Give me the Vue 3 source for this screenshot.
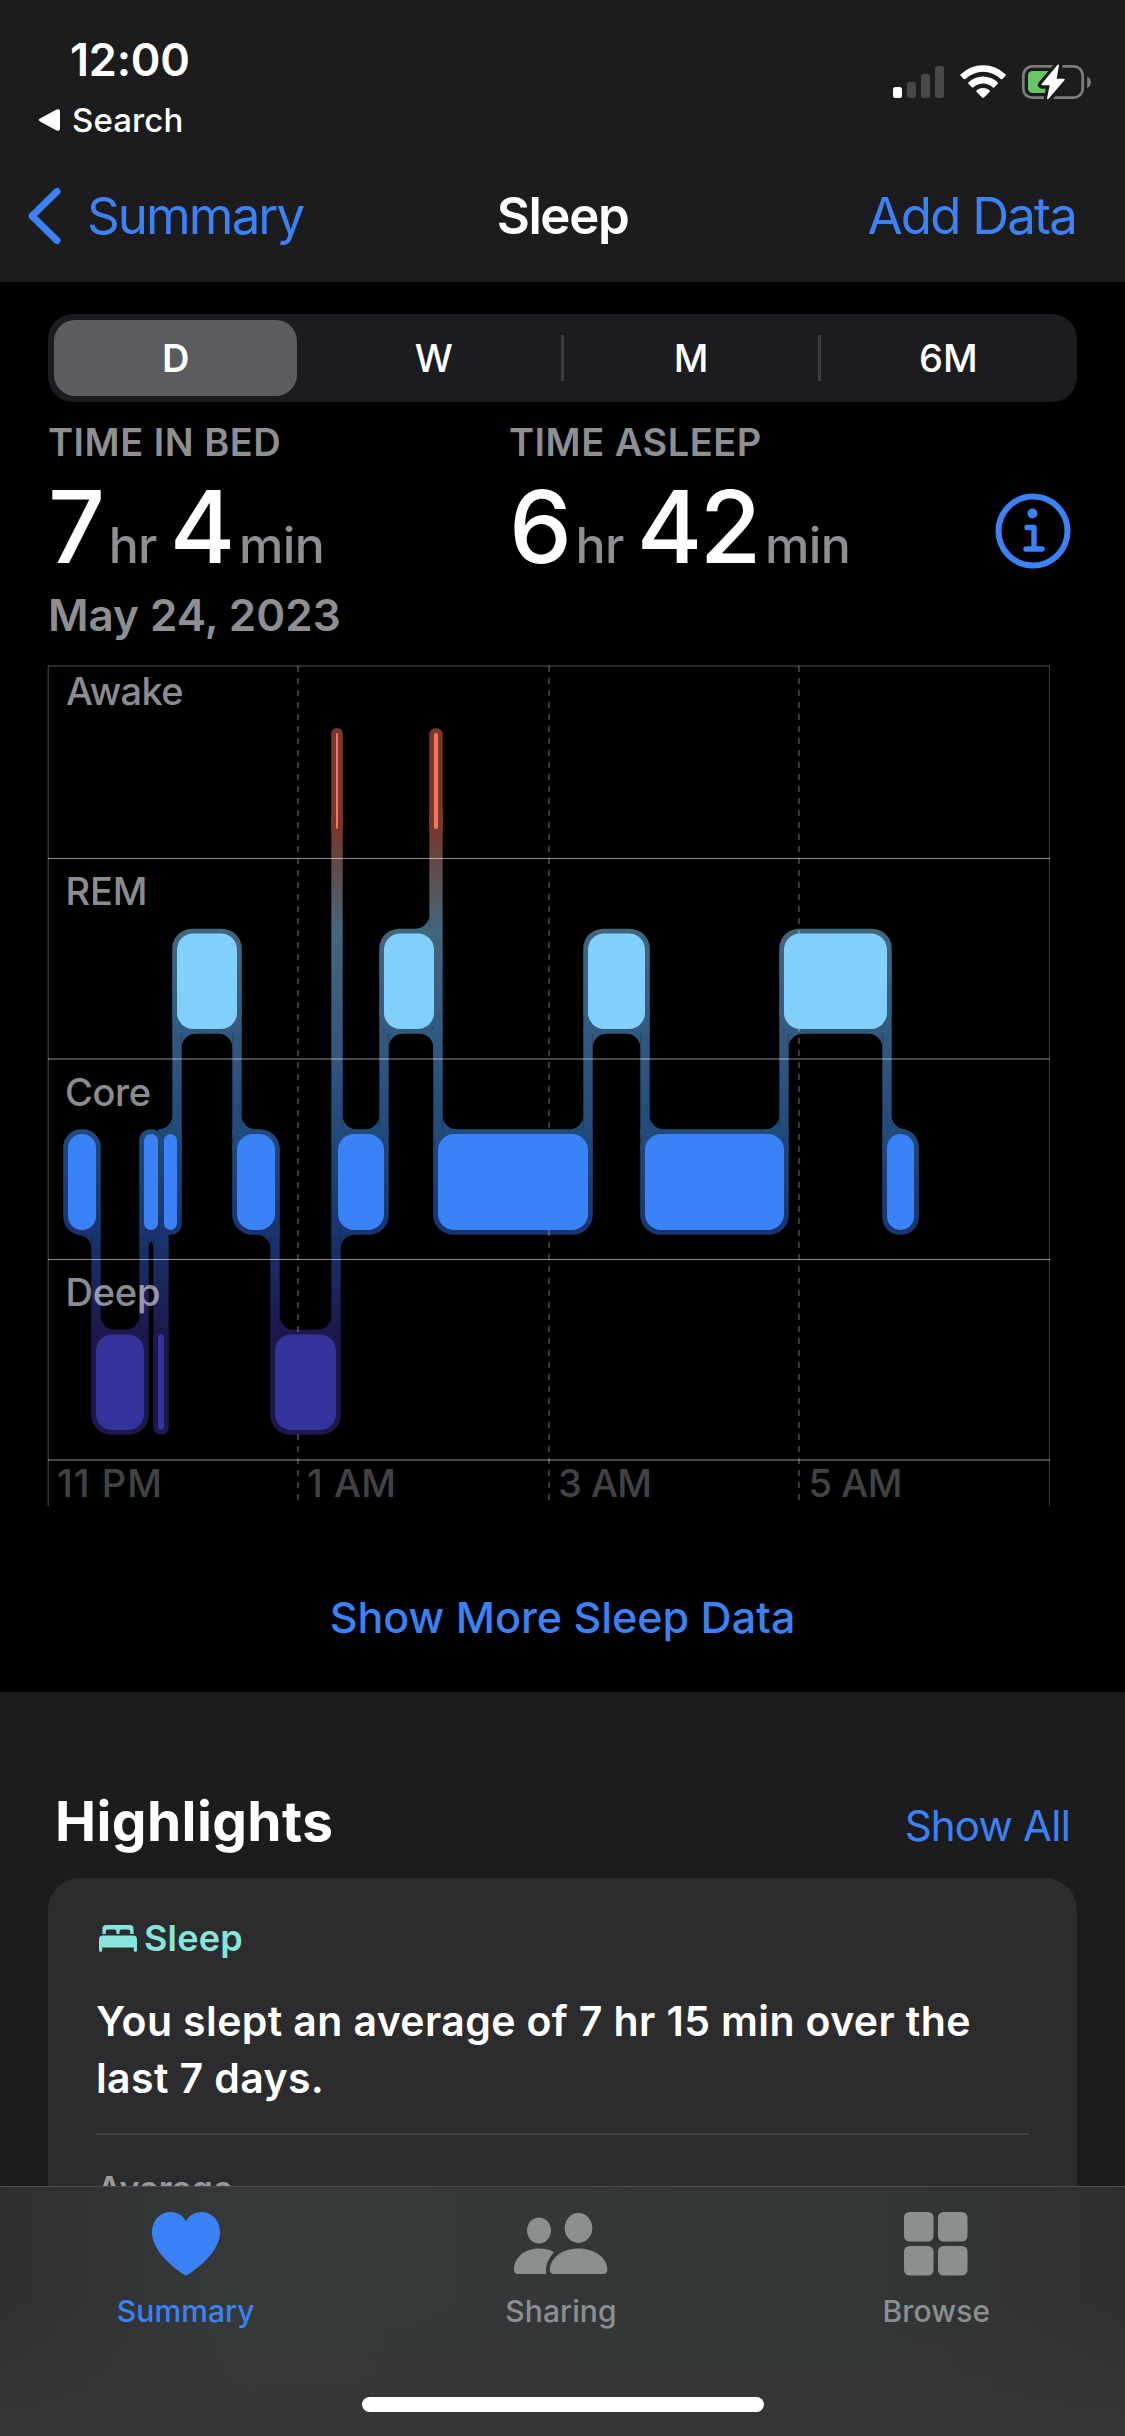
<script setup>
import { ref, computed } from 'vue';

const ranges = ['D', 'W', 'M', '6M'];
const activeRange = ref('D');

const stats = [
  { label: 'TIME IN BED', hours: 7, minutes: 4 },
  { label: 'TIME ASLEEP', hours: 6, minutes: 42 },
];

// top / bottom of each stage lane inside the chart
const stages = {
  awake: { top: 733, bottom: 829, color: '#ff7357' },
  rem: { top: 933.5, bottom: 1029, color: '#82cffc' },
  core: { top: 1134, bottom: 1230, color: '#3b82f7' },
  deep: { top: 1334.5, bottom: 1430, color: '#36349c' },
};

// the night, segment by segment
const segments = [
  { stage: 'core', from: 68, to: 96 },
  { stage: 'deep', from: 96, to: 144 },
  { stage: 'core', from: 144, to: 158 },
  { stage: 'deep', from: 158, to: 164 },
  { stage: 'core', from: 164, to: 177 },
  { stage: 'rem', from: 177, to: 237 },
  { stage: 'core', from: 237, to: 275 },
  { stage: 'deep', from: 275, to: 336 },
  { stage: 'awake', from: 336, to: 338 },
  { stage: 'core', from: 338, to: 384 },
  { stage: 'rem', from: 384, to: 434 },
  { stage: 'awake', from: 434, to: 438 },
  { stage: 'core', from: 438, to: 588 },
  { stage: 'rem', from: 588, to: 645 },
  { stage: 'core', from: 645, to: 784 },
  { stage: 'rem', from: 784, to: 887 },
  { stage: 'core', from: 887, to: 914 },
];

const PAD = 4.7;
const FILLET = 14;

const blocks = computed(() =>
  segments.map((s) => {
    const { top, bottom, color } = stages[s.stage];
    const w = s.to - s.from;
    return { x: s.from, y: top, w, h: bottom - top, r: Math.min(16, w / 2), color };
  })
);

// concave corner between a link and a block, plus the block's own corner squared off
const fillet = (x, y, dx, dy) => {
  const r = FILLET;
  const sweep = dx * dy > 0 ? 0 : 1;
  const x0 = x - dx * PAD * 2;
  const x1 = x + dx * r;
  return (
    `M${x} ${y}H${x1}A${r} ${r} 0 0 ${sweep} ${x} ${y + dy * r}z` +
    `M${x0} ${y}H${x1}V${y - dy * PAD}H${x0}z`
  );
};

const links = computed(() =>
  segments.slice(1).flatMap((next, i) => {
    const prev = segments[i];
    const prevUpper = stages[prev.stage].top < stages[next.stage].top;
    const upper = prevUpper ? prev : next;
    const lower = prevUpper ? next : prev;
    const y1 = stages[upper.stage].bottom - 16;
    const y2 = stages[lower.stage].top + 16;
    const side = prevUpper ? 1 : -1;
    const x = next.from;
    const paths = [`M${x - PAD} ${y1}H${x + PAD}V${y2}H${x - PAD}z`];
    // narrow segments have no room for a rounded corner
    if (upper.to - upper.from > 13) paths.push(fillet(x - side * PAD, stages[upper.stage].bottom + PAD, -side, 1));
    if (lower.to - lower.from > 7) paths.push(fillet(x + side * PAD, stages[lower.stage].top - PAD, side, -1));
    return paths;
  })
);

// links passing behind a neighbouring segment
const crossings = [
  fillet(340.7, 1234.7, 1, 1),
  fillet(433.3, 1033.7, -1, 1),
  'M429.3 1010H438.7V1060H433.3V1010z',
];

const laneLabels = [
  { text: 'Awake', x: 66, y: 704.5, w: 117.5 },
  { text: 'REM', x: 65.5, y: 905, w: 82 },
  { text: 'Core', x: 65, y: 1106, w: 86 },
  { text: 'Deep', x: 65.5, y: 1305.5, w: 95 },
];

const ticks = [
  { text: '11 PM', x: 57, w: 105 },
  { text: '1 AM', x: 307, w: 89 },
  { text: '3 AM', x: 558, w: 94 },
  { text: '5 AM', x: 808.5, w: 94 },
];
</script>

<template>
  <div class="screen">
    <header class="header">
      <div class="status">
        <div class="status-left">
          <div class="clock">12:00</div>
          <div class="back-app">
            <svg width="22" height="22" viewBox="0 0 22 22">
              <path d="M2.5 9.3L18.6 .6Q22 -.6 22 2.4V19.6Q22 22.6 18.6 21.4L2.5 12.7Q-1 11 2.5 9.3z" fill="#fff" />
            </svg>
            <span>Search</span>
          </div>
        </div>
        <svg class="status-icons" width="200" height="38" viewBox="893 63 200 38">
          <rect x="893" y="87" width="9" height="11" rx="2.5" fill="#fff" />
          <g fill="#48484a">
            <rect x="907" y="82" width="9" height="16" rx="2.5" />
            <rect x="921" y="74" width="9" height="24" rx="2.5" />
            <rect x="935" y="66" width="9" height="32" rx="2.5" />
          </g>
          <!-- wifi -->
          <g fill="#fff">
            <path d="M960.8 74.2a32 32 0 0 1 44.6 0q.9.9 0 1.8l-2.9 2.9q-.9.9-1.8 0a25.5 25.5 0 0 0-35.2 0q-.9.9-1.8 0l-2.9-2.9q-.9-.9 0-1.8z" />
            <path d="M968.6 82.2a21 21 0 0 1 29 0q.9.9 0 1.8l-3.2 3.2q-.9.9-1.8 0a14.2 14.2 0 0 0-19 0q-.9.9-1.8 0l-3.2-3.2q-.9-.9 0-1.8z" />
            <path d="M976.7 90.3a9.8 9.8 0 0 1 12.8 0q.9.9 0 1.8l-5.5 5.5q-.9.9-1.8 0l-5.5-5.5q-.9-.9 0-1.8z" />
          </g>
          <!-- battery -->
          <rect x="1023.3" y="66.3" width="59.4" height="31.4" rx="9" fill="none" stroke="#7c7c7e" stroke-width="2.8" />
          <path d="M1087.2 76.5c5 2 5 9.5 0 11.5z" fill="#7c7c7e" />
          <rect x="1028" y="71" width="27" height="22" rx="4.5" fill="#67c767" />
          <path d="M1058.5 65L1042 84.8H1050.6L1047.8 98.8L1064.3 79.3H1056z" fill="#1c1c1e" stroke="#1c1c1e" stroke-width="8" stroke-linejoin="round" />
          <path d="M1058.2 65.3L1042.2 84.5H1050.6L1047.8 98.5L1064 79.5H1055.8z" fill="#fff" stroke="#fff" stroke-width="1.5" stroke-linejoin="round" />
        </svg>
      </div>
      <nav class="nav">
        <a class="nav-back">
          <svg width="34" height="58" viewBox="0 0 34 58">
            <path d="M29 4.5L4 29L29 53.5" fill="none" stroke="#3b82f7" stroke-width="7" stroke-linecap="round" stroke-linejoin="round" />
          </svg>
          <span>Summary</span>
        </a>
        <h1>Sleep</h1>
        <a class="nav-add">Add Data</a>
      </nav>
    </header>

    <main class="content">
      <section class="chart-section">
        <div class="segmented">
          <button
            v-for="r in ranges"
            :key="r"
            :class="['segment', 'segment-' + r, { active: r === activeRange }]"
            @click="activeRange = r"
          >{{ r }}</button>
        </div>

        <div class="stats">
          <div v-for="s in stats" :key="s.label" class="stat">
            <div class="stat-label">{{ s.label }}</div>
            <div class="stat-value">
              <span class="num">{{ s.hours }}</span><span class="unit hr">hr</span><span class="num">{{ s.minutes }}</span><span class="unit">min</span>
            </div>
          </div>
          <svg class="info" width="76" height="76" viewBox="0 0 76 76" fill="none" stroke="#3b82f7">
            <circle cx="38" cy="38" r="34.5" stroke-width="6" />
            <circle cx="37.5" cy="20.5" r="5" fill="#3b82f7" stroke="none" />
            <path d="M32 34.5H39V56M31 56H47" stroke-width="5.4" stroke-linecap="round" stroke-linejoin="round" />
          </svg>
        </div>
        <div class="date">May 24, 2023</div>

        <svg class="chart" width="1125" height="860" viewBox="0 660 1125 860">
          <defs>
            <linearGradient id="stageFill" gradientUnits="userSpaceOnUse" x1="0" y1="829" x2="0" y2="1334">
              <stop offset="0" stop-color="#76382c" />
              <stop offset="0.2" stop-color="#42677c" />
              <stop offset="0.4" stop-color="#325a80" />
              <stop offset="0.6" stop-color="#224a7b" />
              <stop offset="0.8" stop-color="#19346f" />
              <stop offset="1" stop-color="#1b184b" />
            </linearGradient>
          </defs>

          <g fill="url(#stageFill)">
            <rect
              v-for="(b, i) in blocks"
              :key="'o' + i"
              :x="b.x - 4.8"
              :y="b.y - 4.8"
              :width="b.w + 9.6"
              :height="b.h + 9.6"
              :rx="b.r + 4"
            />
            <path v-for="(d, i) in links" :key="'l' + i" :d="d" />
            <path v-for="(d, i) in crossings" :key="'c' + i" :d="d" />
          </g>

          <!-- grid -->
          <g fill="#ebebf5">
            <rect x="48" y="665" width="1002" height="2" opacity="0.17" />
            <rect x="48" y="858" width="1002" height="1" opacity="0.6" />
            <rect x="48" y="1058" width="1002" height="2" opacity="0.3" />
            <rect x="48" y="1259" width="1002" height="1" opacity="0.6" />
            <rect x="48" y="1459" width="1002" height="2" opacity="0.3" />
            <rect x="47.5" y="666" width="1.5" height="840" opacity="0.22" />
            <rect x="1049" y="666" width="1" height="840" opacity="0.25" />
          </g>
          <g stroke="#ebebf5" stroke-opacity="0.25" stroke-width="2" stroke-dasharray="6 6">
            <path d="M298 666V1500" />
            <path d="M549 666V1500" />
            <path d="M799 666V1500" />
          </g>

          <rect
            v-for="(b, i) in blocks"
            :key="'b' + i"
            :x="b.x"
            :y="b.y"
            :width="b.w"
            :height="b.h"
            :rx="b.r"
            :fill="b.color"
          />

          <text v-for="l in laneLabels" :key="l.text" class="lane" :x="l.x" :y="l.y" :textLength="l.w">{{ l.text }}</text>
          <text v-for="t in ticks" :key="t.text" class="tick" :x="t.x" y="1496.5" :textLength="t.w">{{ t.text }}</text>
        </svg>

        <a class="more">Show More Sleep Data</a>
      </section>

      <section class="highlights">
        <div class="highlights-head">
          <h2>Highlights</h2>
          <a>Show All</a>
        </div>
        <div class="card">
          <div class="card-title">
            <svg width="38" height="27" viewBox="0 0 38 27" fill="#88e5dd">
              <path d="M3.5 9V3.5Q3.5 0 7 0H31Q34.5 0 34.5 3.5V9H31.3V6.5Q31.3 4.5 29.3 4.5H22.5Q20.5 4.5 20.5 6.5V9H17.5V6.5Q17.5 4.5 15.5 4.5H8.7Q6.7 4.5 6.7 6.5V9z" />
              <path d="M0 14.5Q0 10.5 4 10.5H34Q38 10.5 38 14.5V25.5Q38 26.8 36.4 26.8T34.8 25.5V22.5H3.2V25.5Q3.2 26.8 1.6 26.8T0 25.5z" />
            </svg>
            <span>Sleep</span>
          </div>
          <p class="card-text">You slept an average of 7 hr 15 min over the<br />last 7 days.</p>
          <div class="card-line"></div>
          <div class="card-sub">Average</div>
        </div>
      </section>
    </main>

    <footer class="tabbar">
      <div class="tabs">
        <a class="tab active">
          <svg width="68" height="64" viewBox="0 0 68 64">
            <path d="M34 63.5C32.5 63.5 0 43 0 20.5C0 8 8.500 0 18.500 0C26 0 31.500 4 34 9.500C36.500 4 42 0 49.500 0C59.500 0 68 8 68 20.500C68 43 35.500 63.500 34 63.500z" fill="currentColor" />
          </svg>
          <span>Summary</span>
        </a>
        <a class="tab">
          <svg width="94" height="64" viewBox="0 0 94 64" fill="currentColor">
            <ellipse cx="25" cy="18.5" rx="12" ry="13" />
            <ellipse cx="64.5" cy="16" rx="13.8" ry="15" />
            <path d="M40 40C34 47 31 54 32.2 62H4Q0 62 0 58C0 46 10 36.5 25 36.5C31 36.5 36 38 40 40z" />
            <path d="M40 62Q35.8 62 35.8 57.5C36.5 46 48 36.5 64.5 36.5S93 46 93.3 57.5Q93.3 62 89 62z" />
          </svg>
          <span>Sharing</span>
        </a>
        <a class="tab">
          <svg width="64" height="64" viewBox="0 0 64 64" fill="currentColor">
            <rect x="0" y="0" width="29.5" height="29.5" rx="5.5" />
            <rect x="34" y="0" width="29.5" height="29.5" rx="5.5" />
            <rect x="0" y="34" width="29.5" height="29.5" rx="5.5" />
            <rect x="34" y="34" width="29.5" height="29.5" rx="5.5" />
          </svg>
          <span>Browse</span>
        </a>
      </div>
      <div class="home-indicator"></div>
    </footer>
  </div>
</template>

<style>
body {
  margin: 0;
  background: #000;
}
</style>

<style scoped>
.screen {
  width: 1125px;
  height: 2436px;
  display: flex;
  flex-direction: column;
  overflow: hidden;
  background: #1c1c1e;
  color: #fff;
  font-family: Inter, "Liberation Sans", sans-serif;
}
svg {
  display: block;
}

/* header */
.header {
  flex: none;
  height: 252px;
  padding-top: 30px;
  background: #1c1c1e;
}
.status {
  display: flex;
  justify-content: space-between;
  height: 119px;
}
.clock {
  padding-left: 70px;
  font-size: 45px;
  font-weight: 600;
  line-height: 60px;
  letter-spacing: -0.2px;
}
.back-app {
  display: flex;
  align-items: center;
  gap: 12px;
  margin-top: 10px;
  padding-left: 38px;
  font-size: 33px;
  font-weight: 500;
  line-height: 40px;
  letter-spacing: 0.1px;
}
.status-icons {
  margin: 33px 32px 0 0;
}
.nav {
  display: grid;
  grid-template-columns: 1fr auto 1fr;
  align-items: center;
  height: 133px;
  padding: 0 49px 0 28px;
  font-size: 51px;
  line-height: 60px;
}
.nav a {
  color: #3b82f7;
}
.nav-back {
  display: flex;
  align-items: center;
  gap: 25px;
  letter-spacing: -1.9px;
}
.nav h1 {
  margin: 0;
  padding-left: 21px;
  font-size: 51px;
  font-weight: 600;
  line-height: 60px;
  letter-spacing: -1.4px;
}
.nav-add {
  text-align: right;
  letter-spacing: -1.8px;
}

/* content */
.content {
  flex: 1;
  min-height: 0;
  overflow: hidden;
}
.chart-section {
  height: 1378px;
  padding-top: 32px;
  background: #000;
}
.segmented {
  display: grid;
  grid-template-columns: repeat(4, 1fr);
  height: 88px;
  margin: 0 48px;
  border-radius: 25px;
  background: #1c1c20;
}
.segment {
  display: flex;
  align-items: center;
  justify-content: center;
  padding: 0;
  border: none;
  background: none;
  color: #fff;
  font-family: inherit;
  font-size: 38px;
  font-weight: 500;
}
.segment.active {
  margin: 6px 8px 6px 6px;
  border-radius: 21px;
  background: #5b5b60;
  font-weight: 600;
}
.segment-M,
.segment-6M {
  margin-left: -2px;
  padding-left: 2px;
  background: linear-gradient(#3c3c40, #3c3c40) 0 50% / 3px 46px no-repeat;
}
.stats {
  display: grid;
  grid-template-columns: 461px 1fr auto;
  margin: 15px 54px 0 48px;
}
.stat-label {
  color: #8e8e93;
  font-size: 38px;
  font-weight: 600;
  line-height: 50px;
  letter-spacing: 0.5px;
}
.stat-value {
  height: 100px;
  margin-top: 10px;
  white-space: nowrap;
  line-height: 100px;
}
.num {
  font-size: 100px;
  font-weight: 500;
  letter-spacing: -2.5px;
}
.unit {
  margin-left: 6px;
  color: #8e8e93;
  font-size: 50px;
  font-weight: 500;
  letter-spacing: -0.6px;
}
.hr {
  margin-right: 13px;
}
.info {
  margin-top: 76px;
}
.date {
  margin: 13px 0 0 48px;
  color: #8e8e93;
  font-size: 44px;
  font-weight: 600;
  line-height: 50px;
}
.chart {
  margin-top: 20px;
}
.lane,
.tick {
  font-size: 38px;
  font-weight: 500;
  fill: rgba(235, 235, 245, 0.6);
}
.tick {
  fill: rgba(235, 235, 245, 0.3);
}
.more {
  display: block;
  padding-top: 67px;
  color: #3b82f7;
  font-size: 43px;
  font-weight: 500;
  line-height: 60px;
  text-align: center;
}

/* highlights */
.highlights-head {
  display: flex;
  justify-content: space-between;
  align-items: baseline;
  padding: 94px 55px 1px 55px;
}
.highlights-head h2 {
  margin: 0;
  font-size: 55px;
  font-weight: 700;
  line-height: 70px;
  letter-spacing: 0.4px;
}
.highlights-head a {
  color: #3b82f7;
  font-size: 42px;
  letter-spacing: -0.8px;
}
.card {
  height: 600px;
  margin: 21px 48px 0;
  padding: 35px 48px 0;
  border-radius: 32px;
  background: #2c2c2e;
}
.card-title {
  display: flex;
  align-items: center;
  gap: 7px;
  padding-left: 3px;
  color: #88e5dd;
  font-size: 36px;
  font-weight: 600;
  line-height: 50px;
  letter-spacing: 0.2px;
}
.card-text {
  margin: 30px 0 0;
  white-space: nowrap;
  font-size: 41px;
  font-weight: 600;
  line-height: 57px;
  letter-spacing: 0.38px;
}
.card-line {
  height: 2px;
  margin-top: 26px;
  background: #434346;
}
.card-sub {
  margin-top: 29px;
  padding-left: 1px;
  color: #98989f;
  font-size: 34px;
  font-weight: 600;
  line-height: 50px;
}

/* tab bar */
.tabbar {
  flex: none;
  box-sizing: border-box;
  height: 250px;
  border-top: 1px solid #4b4c4d;
  background:
    linear-gradient(to bottom, rgba(54, 54, 55, 0) 45%, #363637 100%),
    linear-gradient(to right, #2f2f30 0, #363a3a 22%, #323637 60%, #323637 78%, #2f2f30 100%);
}
.tabs {
  display: grid;
  grid-template-columns: repeat(3, 1fr);
  margin: 0 1px 0 -2px;
  padding-top: 25px;
}
.tab {
  display: flex;
  flex-direction: column;
  align-items: center;
  gap: 15px;
  color: #8b8f90;
  font-size: 30px;
  font-weight: 500;
  line-height: 40px;
  letter-spacing: 0.1px;
}
.tab.active {
  color: #3b82f7;
}
.home-indicator {
  width: 402px;
  height: 15px;
  margin: 66px auto 0;
  border-radius: 8px;
  background: #fff;
}
</style>
